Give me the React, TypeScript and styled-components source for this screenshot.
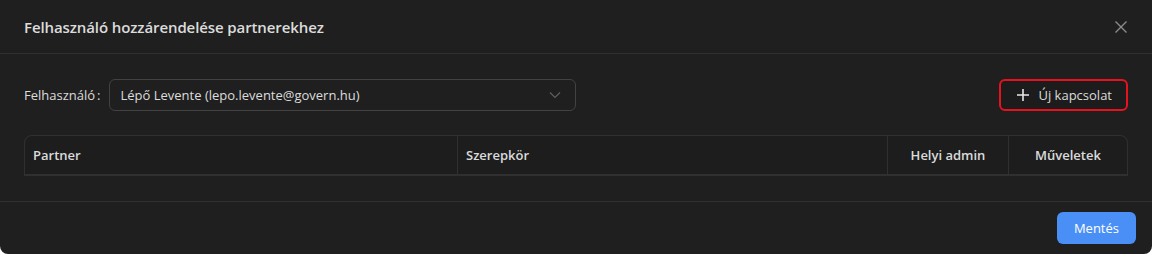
import React from 'react';
import styled, { createGlobalStyle } from 'styled-components';

const GlobalStyle = createGlobalStyle`
  body {
    margin: 0;
    background: #ffffff;
    font-family: "Open Sans", "Noto Sans", Arial, sans-serif;
  }
`;

const Modal = styled.div`
  width: 1152px;
  height: 254px;
  box-sizing: border-box;
  background: #1f1f1f;
  border-radius: 0 0 8px 8px;
  color: rgba(255, 255, 255, 0.85);
  display: flex;
  flex-direction: column;
`;

const Header = styled.div`
  height: 54px;
  box-sizing: border-box;
  padding: 0 20px 0 24px;
  border-bottom: 1px solid #303030;
  display: flex;
  align-items: center;
  justify-content: space-between;
`;

const Title = styled.h2`
  margin: 0;
  font-size: 15px;
  font-weight: 600;
  color: rgba(255, 255, 255, 0.85);
  letter-spacing: -0.1px;
`;

const CloseButton = styled.button`
  width: 22px;
  height: 22px;
  padding: 0;
  border: 0;
  background: transparent;
  display: flex;
  align-items: center;
  justify-content: center;
  cursor: pointer;
`;

const Body = styled.div`
  padding: 25px 24px 25px;
  border-bottom: 1px solid #303030;
  display: flex;
  flex-direction: column;
  gap: 24px;
`;

const Toolbar = styled.div`
  display: flex;
  align-items: center;
  justify-content: space-between;
  height: 32px;
`;

const Field = styled.div`
  display: flex;
  align-items: center;
`;

const Label = styled.label`
  font-size: 13px;
  color: rgba(255, 255, 255, 0.85);
  margin-right: 8px;
  display: flex;
  gap: 2px;
`;

const Select = styled.div`
  width: 467px;
  height: 32px;
  box-sizing: border-box;
  border: 1px solid #424242;
  border-radius: 6px;
  padding: 0 14px 0 11px;
  display: flex;
  align-items: center;
  justify-content: space-between;
  font-size: 13px;
  color: rgba(255, 255, 255, 0.85);
`;

const Button = styled.button<{ $primary?: boolean }>`
  height: 32px;
  box-sizing: border-box;
  border-radius: 6px;
  font-family: inherit;
  font-size: 13px;
  display: flex;
  align-items: center;
  gap: 8px;
  cursor: pointer;
  padding: ${(p) => (p.$primary ? '0 17px' : '0 14px 0 15px')};
  background: ${(p) => (p.$primary ? '#4a8ff5' : '#1c1c1c')};
  color: ${(p) => (p.$primary ? '#ffffff' : 'rgba(255, 255, 255, 0.85)')};
  border: ${(p) => (p.$primary ? '0' : '2px solid #e8121e')};
`;

const Table = styled.div`
  display: grid;
  grid-template-columns: 432px 430px 121px 1fr;
  border: 1px solid #303030;
  border-bottom: 2px solid #303030;
  border-radius: 8px 8px 0 0;
  background: #1d1d1d;
  height: 41px;
  box-sizing: border-box;
`;

const HeadCell = styled.div<{ $center?: boolean }>`
  display: flex;
  align-items: center;
  justify-content: ${(p) => (p.$center ? 'center' : 'flex-start')};
  padding: 0 8px;
  font-size: 13px;
  font-weight: 600;
  color: rgba(255, 255, 255, 0.85);
  & + & {
    border-left: 1px solid #303030;
  }
`;

const Footer = styled.div`
  flex: 1;
  display: flex;
  align-items: center;
  justify-content: flex-end;
  padding: 0 16px;
`;

export default function App() {
  return (
    <>
      <GlobalStyle />
      <Modal>
        <Header>
          <Title>Felhasználó hozzárendelése partnerekhez</Title>
          <CloseButton aria-label="Bezárás">
            <svg width="14" height="14" viewBox="0 0 14 14">
              <path d="M1.5 1.5 L12.5 12.5 M12.5 1.5 L1.5 12.5" stroke="#8c8c8c" strokeWidth="1.4" />
            </svg>
          </CloseButton>
        </Header>
        <Body>
          <Toolbar>
            <Field>
              <Label>
                <span>Felhasználó</span>
                <span>:</span>
              </Label>
              <Select>
                <span>Lépő Levente (lepo.levente@govern.hu)</span>
                <svg width="12" height="8" viewBox="0 0 12 8">
                  <path d="M1 1.5 L6 6.5 L11 1.5" fill="none" stroke="#5f5f5f" strokeWidth="1.2" />
                </svg>
              </Select>
            </Field>
            <Button>
              <svg width="14" height="14" viewBox="0 0 14 14">
                <path d="M7 1 V13 M1 7 H13" stroke="#e6e6e6" strokeWidth="1.6" />
              </svg>
              Új kapcsolat
            </Button>
          </Toolbar>
          <Table>
            <HeadCell>Partner</HeadCell>
            <HeadCell>Szerepkör</HeadCell>
            <HeadCell $center>Helyi admin</HeadCell>
            <HeadCell $center>Műveletek</HeadCell>
          </Table>
        </Body>
        <Footer>
          <Button $primary>Mentés</Button>
        </Footer>
      </Modal>
    </>
  );
}
